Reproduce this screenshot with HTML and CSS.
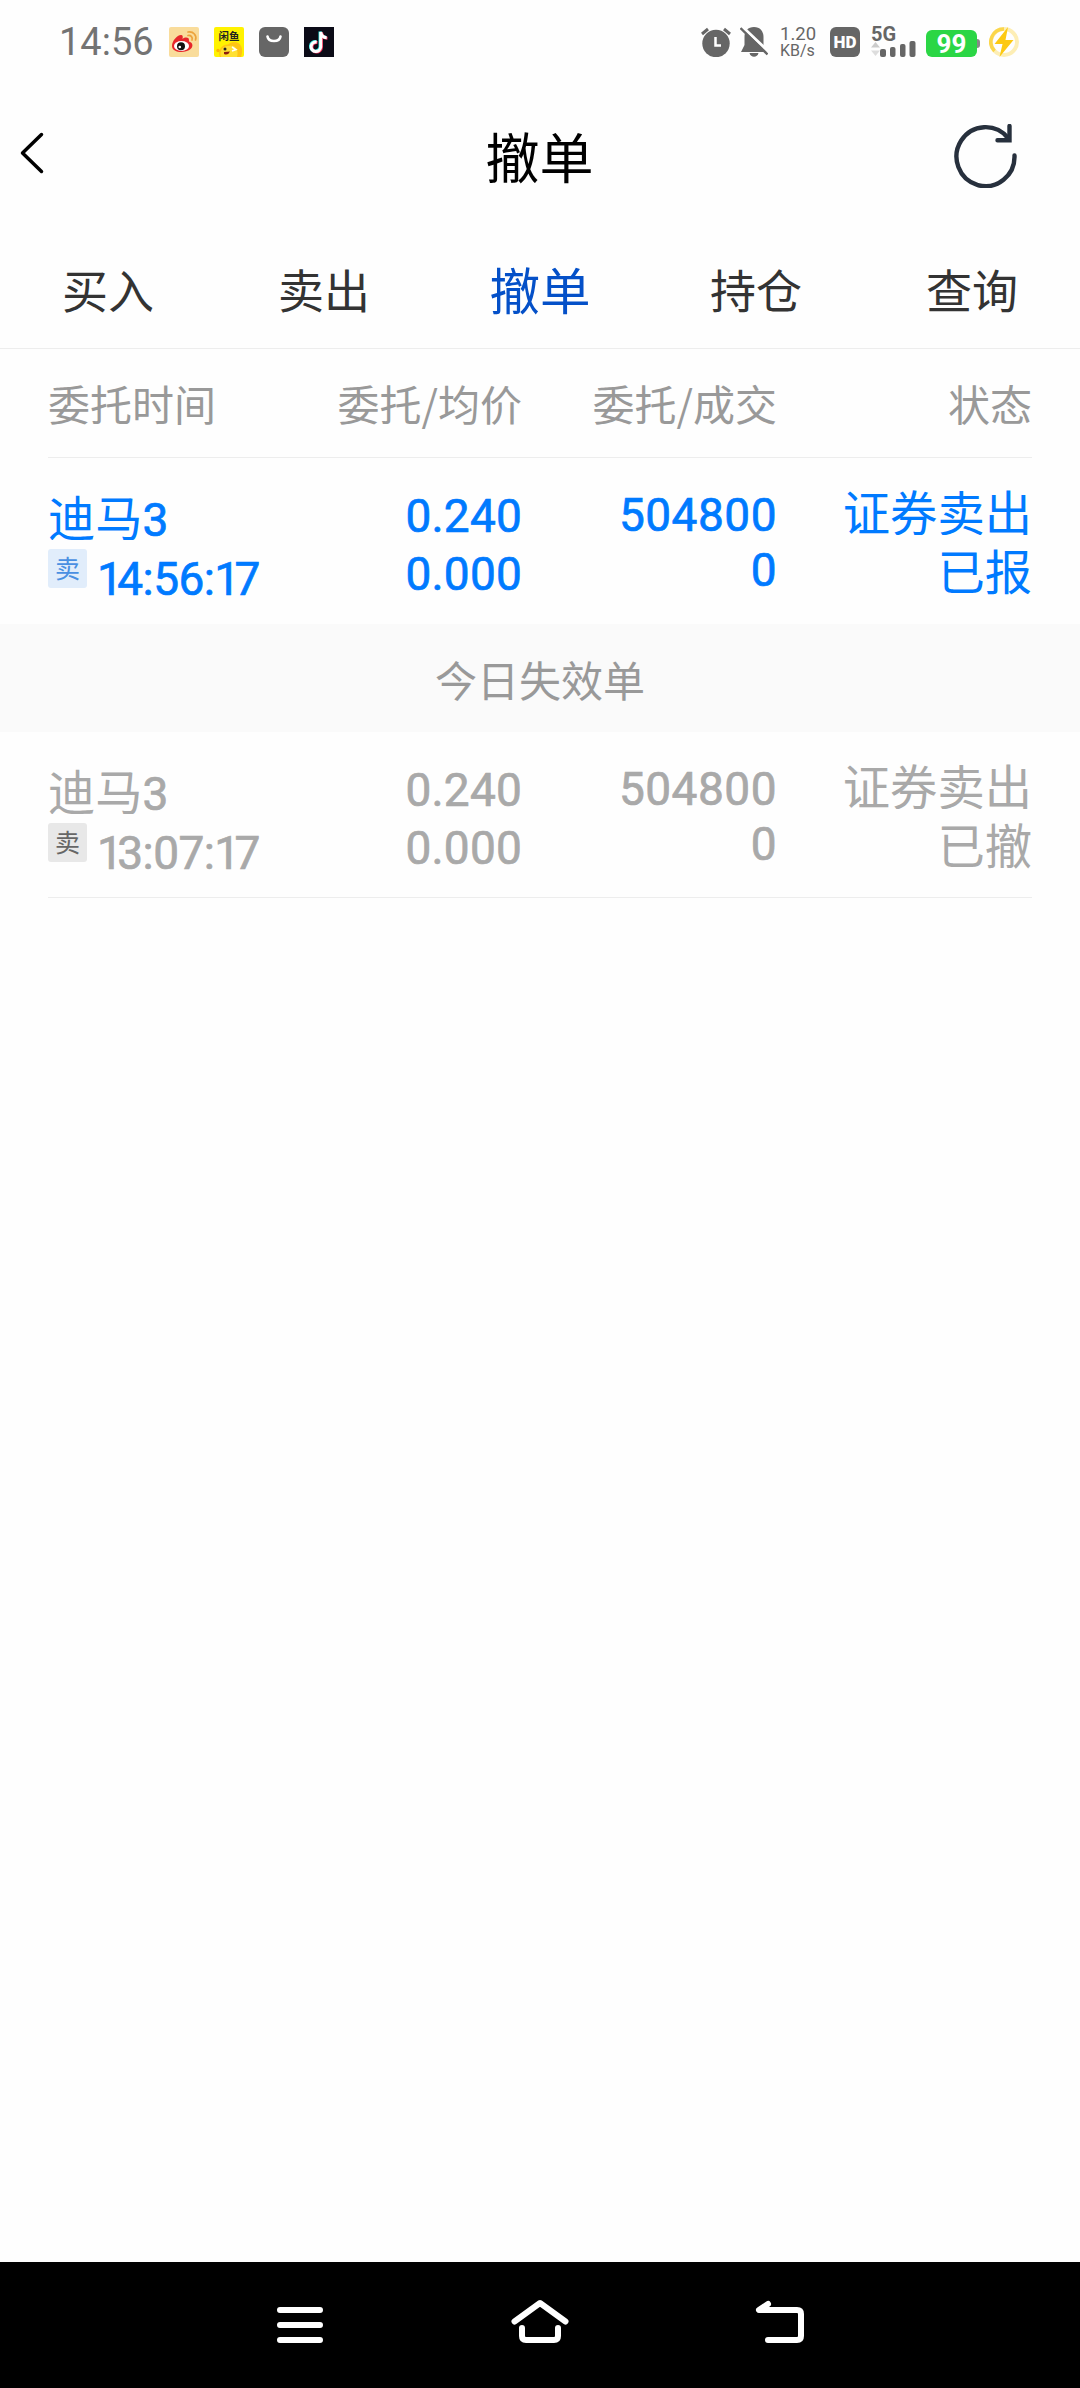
FILE: index.html
```html
<!DOCTYPE html>
<html lang="zh-CN">
<head>
    <meta charset="UTF-8">
    <meta name="viewport" content="width=device-width, initial-scale=1.0">
    <title>撤单</title>
    <link rel="stylesheet" href="styles.css">
</head>
<body>
    <div class="status-bar">
        <span class="clock">14:56</span>
        <div class="app-icons">
            <!-- weibo -->
            <svg width="30" height="30" viewBox="0 0 30 30">
                <rect width="30" height="30" rx="2" fill="#f9dc9b"/>
                <path d="M3 19C3 14 8 8 12 8C14 8 14 10 13.500 12C16 10 20 10 20 13C20 14 19.500 14.500 21 15C24 16 24.500 20 21 22.500C16 26.500 3 26 3 19Z" fill="#e6262b"/>
                <ellipse cx="12.500" cy="19" rx="7.500" ry="5" fill="#fff"/>
                <circle cx="12" cy="19.200" r="4" fill="#111"/>
                <circle cx="10.800" cy="20" r="1.300" fill="#fff"/>
                <path d="M19 8.500C22 8 24 10.500 23 13M19 5C24.500 4 28 8.500 26.500 13" fill="none" stroke="#eca33c" stroke-width="1.700" stroke-linecap="round"/>
            </svg>
            <!-- xianyu -->
            <svg width="30" height="30" viewBox="0 0 30 30">
                <rect width="30" height="30" rx="2" fill="#fff200"/>
                <path d="M6 30C3 22 9 17 14 17.500C17 14 25 14 27 19C29 23 28 27 27 30Z" fill="#ffc414"/>
                <path d="M7 30C5 24 9 18 15 19C22 17 25 24 23 30Z" fill="#ffe033"/>
                <circle cx="4" cy="23.500" r="1.700" fill="#ffb400"/>
                <circle cx="11" cy="22" r="1.500" fill="#222"/>
                <path d="M18 20L22 22.500L18 24" fill="none" stroke="#fff" stroke-width="1.500"/>
                <path d="M10 25L16 24.500Q14 29 10 27Z" fill="#8b1c10"/>
                <text x="15" y="13" class="fish-text">闲鱼</text>
            </svg>
            <!-- shop bag -->
            <svg width="30" height="30" viewBox="0 0 30 30">
                <rect width="30" height="30" rx="6" fill="#666"/>
                <path d="M8.500 9.500C9.500 15.500 20.500 15.500 21.500 9.500" fill="none" stroke="#fff" stroke-width="2.600" stroke-linecap="round"/>
            </svg>
            <!-- douyin -->
            <svg width="30" height="30" viewBox="0 0 30 30" fill="none" stroke-width="3">
                <rect width="30" height="30" fill="#0b0b17"/>
                <path d="M12 14.500A4.800 4.800 0 1 0 16 19.500V4.500C16.500 8 19 10 22 10.200" stroke="#2de4df"/>
                <path d="M13.500 15.500A4.800 4.800 0 1 0 17.500 20.500V5.500C18 9 20.500 11 23.500 11.200" stroke="#f4345c"/>
                <path d="M12.700 15A4.800 4.800 0 1 0 16.700 20V5C17.200 8.500 19.700 10.500 22.700 10.700" stroke="#fff"/>
            </svg>
        </div>

        <div class="sys-icons">
            <svg class="alarm" width="30" height="30" viewBox="0 0 30 30">
                <circle cx="15" cy="16.500" r="13.700" fill="#666"/>
                <path d="M1 7L7 2M29 7L23 2" stroke="#666" stroke-width="3"/>
                <path d="M14.500 10V18.500H20" fill="none" stroke="#fff" stroke-width="2.500"/>
            </svg>
            <svg class="mute" width="28" height="30" viewBox="0 0 28 30">
                <path d="M14 0C20 0 23.500 4 23.500 10V18L27 25H1L4.500 18V10C4.500 4 8 0 14 0Z" fill="#666"/>
                <path d="M9.500 26H18.500C17.500 31 10.500 31 9.500 26Z" fill="#666"/>
                <path d="M2 -0.500L29.500 25.500" stroke="#fff" stroke-width="3"/>
                <path d="M0.500 1L27.500 27.500" stroke="#666" stroke-width="2.400"/>
            </svg>
            <div class="speed"><span>1.20</span><span class="unit">KB/s</span></div>
            <span class="hd">HD</span>
            <div class="signal">
                <span class="net">5G</span>
                <svg width="45" height="17" viewBox="0 0 45 17">
                    <path d="M0 7.500L4.500 2L9 7.500Z" fill="#ccc"/>
                    <path d="M0 10.500L4.500 16L9 10.500Z" fill="#ddd"/>
                    <rect x="9" y="9" width="6" height="8" rx="2" fill="#666"/>
                    <rect x="19" y="7" width="5.500" height="10" rx="2" fill="#666"/>
                    <rect x="29" y="4" width="5.500" height="13" rx="2" fill="#666"/>
                    <rect x="38.500" y="1" width="6" height="16" rx="2" fill="#666"/>
                </svg>
            </div>
            <div class="battery"><span class="level">99</span><span class="nub"></span></div>
            <svg class="charge" width="30" height="30" viewBox="0 0 30 30">
                <circle cx="15" cy="15" r="13" fill="none" stroke="#fdeeb5" stroke-width="4"/>
                <path d="M15 2A13 13 0 0 0 5.500 24" fill="none" stroke="#fbd64b" stroke-width="3.500"/>
                <path d="M19 0L5.500 17H13.500L10.500 30L24.500 13H16.500Z" fill="#fdc912"/>
            </svg>
        </div>
    </div>

    <header class="header">
        <svg class="back" width="26" height="42" viewBox="0 0 26 42">
            <path d="M22.500 2.500L3.500 21L22.500 39.500" fill="none" stroke="#000" stroke-width="3.500" stroke-linecap="round" stroke-linejoin="round"/>
        </svg>
        <h1 class="title">撤单</h1>
        <svg class="refresh" width="64" height="64" viewBox="0 0 64 64">
            <path d="M60.500 31.500A29 29.500 0 1 1 54 14" fill="none" stroke="#27303d" stroke-width="4.400" stroke-linecap="round"/>
            <path d="M55.500 2V16.200H43.500" fill="none" stroke="#27303d" stroke-width="4.400" stroke-linecap="round"/>
        </svg>
    </header>

    <nav class="tabs">
        <a class="tab">买入</a>
        <a class="tab">卖出</a>
        <a class="tab active">撤单</a>
        <a class="tab">持仓</a>
        <a class="tab">查询</a>
    </nav>

    <main class="orders">
        <div class="grid table-head">
            <span>委托时间</span>
            <span>委托/均价</span>
            <span>委托/成交</span>
            <span>状态</span>
        </div>

        <div class="grid order">
            <div class="stock">
                <div class="name">迪马<span class="num">3</span></div>
                <div class="when"><span class="badge">卖</span><span class="time"><i>1</i>4:56:<i>1</i>7</span></div>
            </div>
            <div class="price"><span>0.240</span><span>0.000</span></div>
            <div class="amount"><span>504800</span><span>0</span></div>
            <div class="state"><span class="kind">证券卖出</span><span>已报</span></div>
        </div>

        <div class="section">今日失效单</div>

        <div class="grid order invalid">
            <div class="stock">
                <div class="name">迪马<span class="num">3</span></div>
                <div class="when"><span class="badge">卖</span><span class="time"><i>1</i>3:07:<i>1</i>7</span></div>
            </div>
            <div class="price"><span>0.240</span><span>0.000</span></div>
            <div class="amount"><span>504800</span><span>0</span></div>
            <div class="state"><span class="kind">证券卖出</span><span>已撤</span></div>
        </div>
    </main>

    <footer class="nav-bar">
        <svg width="60" height="60" viewBox="0 0 60 60">
            <path d="M10 18H50M10 33H50M10 48H50"/>
        </svg>
        <svg width="60" height="60" viewBox="0 0 60 60">
            <path d="M4.500 29.500L30 11L55.500 29.500"/>
            <path d="M12 36V44Q12 48 16 48H44Q48 48 48 44V36"/>
        </svg>
        <svg width="60" height="60" viewBox="0 0 60 60">
            <path d="M18 12L9 18H47Q51 18 51 22V44Q51 48 47 48H18"/>
        </svg>
    </footer>
</body>
</html>
```
FILE: styles.css
```css
:root {
    --blue: #007aff;
    --blue-dark: #0450c8;
    --gray: #999;
    --gray-light: #a9a9a9;
    --line: #ededed;
    --icon: #666;
}

* {
    box-sizing: border-box;
}

body {
    margin: 0;
    min-height: 100vh;
    display: flex;
    flex-direction: column;
    background: #fefefe;
    color: #000;
    font-family: "Noto Sans CJK SC", sans-serif;
}

svg {
    display: block;
    flex: none;
}

/* status bar */
.status-bar {
    display: flex;
    align-items: center;
    height: 84px;
    padding: 0 61px 0 59px;
    font-family: Roboto, sans-serif;
    color: var(--icon);
}

.clock {
    width: 110px;
    font-size: 38px;
    color: #737373;
}

.app-icons {
    display: flex;
    gap: 15px;
}

.fish-text {
    font-family: "Noto Sans CJK SC", sans-serif;
    font-size: 10.5px;
    font-weight: 700;
    fill: #222;
    text-anchor: middle;
}

.sys-icons {
    display: flex;
    align-items: center;
    margin-left: auto;
}

.mute {
    margin-left: 9px;
}

.speed {
    display: flex;
    flex-direction: column;
    width: 36px;
    margin-left: 12px;
    font-size: 18.5px;
    line-height: 18px;
}

.speed .unit {
    font-size: 16px;
    line-height: 16px;
}

.hd {
    width: 30px;
    height: 30px;
    margin-left: 14px;
    border-radius: 6px;
    background: var(--icon);
    color: #fff;
    font-size: 17px;
    font-weight: 900;
    line-height: 31px;
    text-align: center;
}

.signal {
    width: 45px;
    height: 30px;
    margin-left: 11px;
}

.net {
    display: block;
    height: 13px;
    font-size: 20px;
    font-weight: 700;
    line-height: 15px;
}

.battery {
    display: flex;
    align-items: center;
    margin: 3px 0 0 10px;
}

.level {
    width: 51px;
    height: 27px;
    border-radius: 6px;
    background: #2bd645;
    color: #fff;
    font-size: 26px;
    font-weight: 700;
    line-height: 28px;
    text-align: center;
}

.nub {
    width: 3px;
    height: 9px;
    border-radius: 0 3px 3px 0;
    background: #888;
}

.charge {
    margin-left: 9px;
}

/* title */
.header {
    display: flex;
    align-items: center;
    justify-content: space-between;
    height: 152px;
    padding: 0 62px 0 19px;
}

.back {
    margin: 0 38px 14px 0;
}

.title {
    margin: 0;
    padding: 0 0 8px 42px;
    font-size: 54px;
    font-weight: 400;
    line-height: 144px;
}

.refresh {
    margin-bottom: 9px;
}

/* tabs */
.tabs {
    display: grid;
    grid-template-columns: repeat(5, 1fr);
    height: 113px;
    border-bottom: 1px solid var(--line);
    text-align: center;
}

.tab {
    font-size: 46px;
    line-height: 105px;
    color: #333;
}

.tab.active {
    font-size: 50.5px;
    line-height: 104px;
    color: var(--blue-dark);
}

/* orders */
.orders {
    flex: 1;
}

.grid {
    display: grid;
    grid-template-columns: 218px 256px 255px 255px;
    margin: 0 48px;
}

.table-head {
    height: 109px;
    border-bottom: 1px solid var(--line);
    font-size: 42px;
    line-height: 108px;
    color: var(--gray);
    text-align: right;
}

.table-head span:first-child {
    text-align: left;
}

.order {
    height: 166px;
    font-size: 47.3px;
    color: var(--blue);
}

.order.invalid {
    border-bottom: 1px solid var(--line);
    color: var(--gray-light);
}

.num,
.time,
.price,
.amount {
    font-family: Roboto, sans-serif;
    font-size: 46px;
    -webkit-text-stroke: 0.7px currentColor;
}

.name {
    height: 48px;
    margin-top: 34px;
    line-height: 48px;
    overflow: hidden;
}

.when {
    display: flex;
    padding-top: 9px;
}

.badge {
    width: 39px;
    height: 39px;
    border-radius: 3px;
    background: #e1edfb;
    color: #4a90e2;
    font-size: 25px;
    line-height: 37px;
    text-align: center;
}

.invalid .badge {
    background: #e8e8e8;
    color: #666;
}

.time {
    margin-left: 10px;
    line-height: 60px;
    letter-spacing: -0.6px;
}

/* the figure 1 is set tighter than the other digits */
.time i {
    font-style: normal;
    letter-spacing: -5.5px;
}

.price,
.amount,
.state {
    display: flex;
    flex-direction: column;
    text-align: right;
}

.price {
    padding-top: 29px;
    line-height: 58px;
    letter-spacing: 0.2px;
}

.amount {
    padding-top: 30px;
    line-height: 55px;
    letter-spacing: 0.5px;
}

.state {
    padding-top: 25px;
    line-height: 58px;
}

.kind {
    height: 52px;
    margin-bottom: 6px;
    line-height: 56px;
    overflow: hidden;
}

.section {
    height: 108px;
    background: #fafafa;
    font-size: 42px;
    line-height: 109px;
    color: var(--gray);
    text-align: center;
}

/* system navigation */
.nav-bar {
    display: flex;
    justify-content: center;
    gap: 180px;
    height: 126px;
    padding-top: 30px;
    background: #000;
    fill: none;
    stroke: #fff;
    stroke-width: 6px;
    stroke-linecap: round;
    stroke-linejoin: round;
}
```
